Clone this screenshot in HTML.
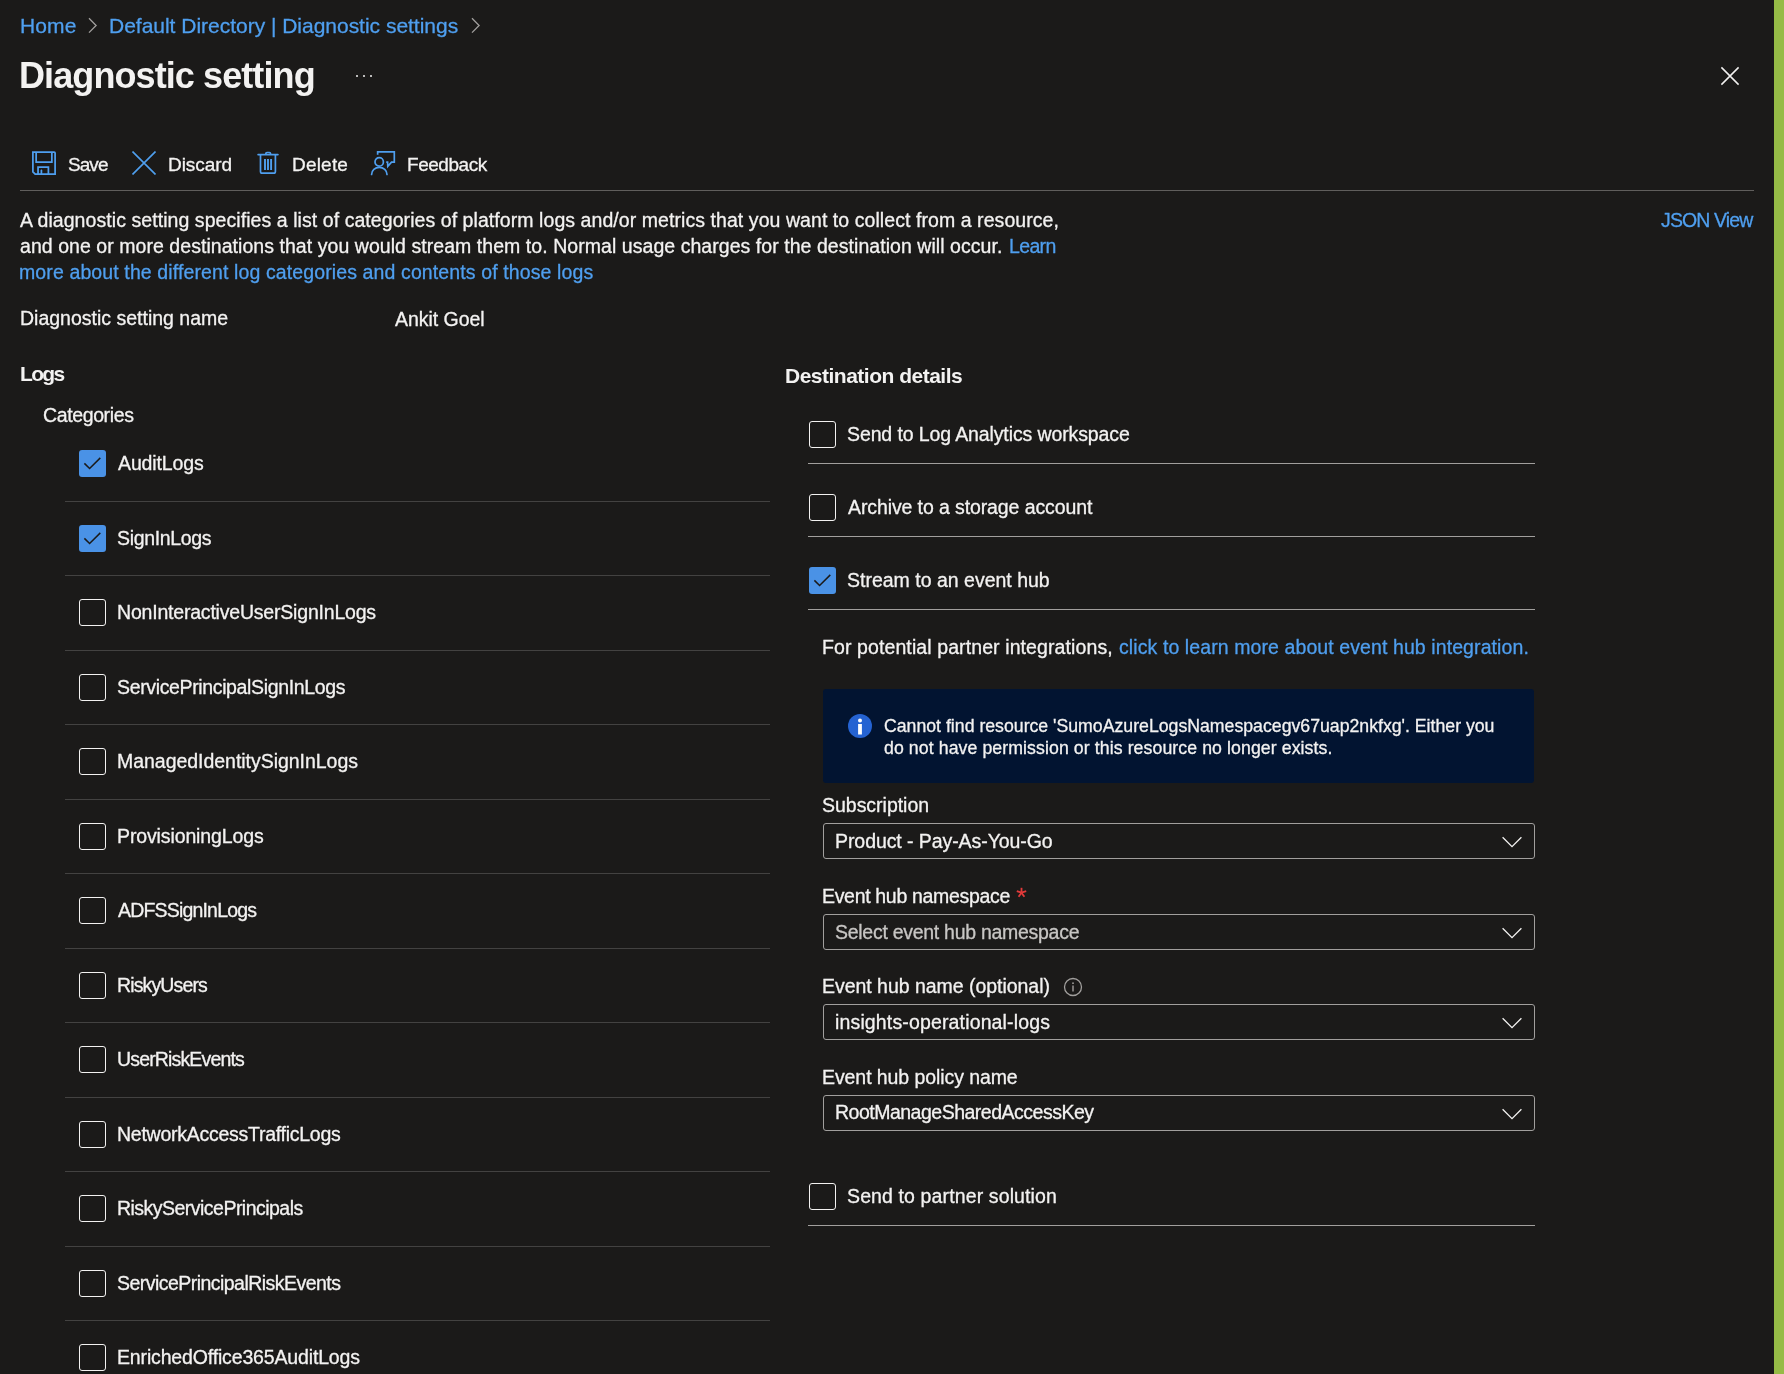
<!DOCTYPE html>
<html><head><meta charset="utf-8"><title>Diagnostic setting</title>
<style>
html,body{margin:0;padding:0;}
body{width:1784px;height:1374px;background:#1b1a19;position:relative;overflow:hidden;font-family:"Liberation Sans",sans-serif;}
.t{position:absolute;white-space:nowrap;will-change:transform;-webkit-text-stroke:0.3px currentColor;}
</style></head><body>
<div style="position:absolute;left:1774px;top:0px;width:10px;height:1374px;background:#96bb46"></div>
<div id="t_Home" class="t" style="left:20.31px;top:15px;font-size:21px;line-height:21px;font-weight:400;color:#4f9fef;letter-spacing:0.133px;">Home</div>
<svg style="position:absolute;left:86px;top:17px" width="14" height="18" viewBox="0 0 14 18"><path d="M3 1.3 L10.1 8.45 L3 15.6" fill="none" stroke="#a19f9d" stroke-width="1.3"/></svg>
<div id="t_DefaultDirectoryDiagnosticsettings" class="t" style="left:109.31px;top:15px;font-size:21px;line-height:21px;font-weight:400;color:#4f9fef;letter-spacing:-0.016px;">Default Directory | Diagnostic settings</div>
<svg style="position:absolute;left:469px;top:17px" width="14" height="18" viewBox="0 0 14 18"><path d="M3 1.3 L10.1 8.45 L3 15.6" fill="none" stroke="#a19f9d" stroke-width="1.3"/></svg>
<div id="t_Diagnosticsetting" class="t" style="left:19.00px;top:58px;font-size:36px;line-height:36px;font-weight:700;color:#f3f2f1;letter-spacing:-0.906px;-webkit-text-stroke:0;">Diagnostic setting</div>
<div style="position:absolute;left:356.2px;top:75px;width:2px;height:2px;background:#f3f2f1;border-radius:50%"></div>
<div style="position:absolute;left:362.95px;top:75px;width:2px;height:2px;background:#f3f2f1;border-radius:50%"></div>
<div style="position:absolute;left:369.7px;top:75px;width:2px;height:2px;background:#f3f2f1;border-radius:50%"></div>
<svg style="position:absolute;left:1720px;top:66px" width="20" height="20" viewBox="0 0 20 20"><path d="M1.4 1.4 L18.6 18.6 M18.6 1.4 L1.4 18.6" fill="none" stroke="#f3f2f1" stroke-width="1.5"/></svg>
<svg style="position:absolute;left:32px;top:151px" width="24" height="24" viewBox="0 0 24 24" fill="none" stroke="#4f9fef" stroke-width="1.75">
<path d="M0.9 1 H22.1 Q23.1 1 23.1 2 V23.1 H3.2 L0.9 20.8 Z"/>
<path d="M4.15 1 V11.05 H19.85 V1"/>
<path d="M6.05 23.1 V16.15 H16.4 V23.1"/>
<path d="M9.4 23.1 V19.4" stroke-linecap="round"/>
</svg>
<div id="t_Save" class="t" style="left:67.71px;top:155px;font-size:19px;line-height:19px;font-weight:400;color:#f3f2f1;letter-spacing:-0.933px;">Save</div>
<svg style="position:absolute;left:132px;top:151px" width="24" height="24" viewBox="0 0 24 24"><path d="M0.5 0.5 L23.5 23.5 M23.5 0.5 L0.5 23.5" fill="none" stroke="#4f9fef" stroke-width="1.6"/></svg>
<div id="t_Discard" class="t" style="left:167.60px;top:155px;font-size:19px;line-height:19px;font-weight:400;color:#f3f2f1;letter-spacing:-0.067px;">Discard</div>
<svg style="position:absolute;left:257px;top:151px" width="22" height="24" viewBox="0 0 22 24" fill="none" stroke="#4f9fef" stroke-width="1.7">
<path d="M1.1 3.6 H20.9" stroke-linecap="round"/>
<path d="M8.9 3.6 V2.6 Q8.9 1.5 10 1.5 H12.4 Q13.5 1.5 13.5 2.6 V3.6"/>
<path d="M3.5 3.6 V20.4 Q3.5 22.1 5.2 22.1 H16.7 Q18.4 22.1 18.4 20.4 V3.6"/>
<path d="M8 7.9 V19 M11 7.9 V19 M14.1 7.9 V19" stroke-width="1.9"/>
</svg>
<div id="t_Delete" class="t" style="left:291.71px;top:155px;font-size:19px;line-height:19px;font-weight:400;color:#f3f2f1;letter-spacing:0.200px;">Delete</div>
<svg style="position:absolute;left:370px;top:151px" width="26" height="25" viewBox="0 0 26 25" fill="none" stroke="#4f9fef" stroke-width="1.7">
<path d="M7.65 3.7 V0.8 H24.3 V11.15 H21.5 L17.8 15.3 L17.6 11.15 H16.2"/>
<circle cx="9.2" cy="10.9" r="4.2"/>
<path d="M1.6 23.5 A7.7 7.2 0 0 1 17 23.5" stroke-linecap="round"/>
</svg>
<div id="t_Feedback" class="t" style="left:407.31px;top:155px;font-size:19px;line-height:19px;font-weight:400;color:#f3f2f1;letter-spacing:-0.457px;">Feedback</div>
<div style="position:absolute;left:20px;top:190px;width:1734px;height:1px;background:#605e5c"></div>
<div id="t_Adiagnosticsettingspecifiesalistofcatego" class="t" style="left:20.40px;top:211px;font-size:19.5px;line-height:19.5px;font-weight:400;color:#f3f2f1;letter-spacing:0.066px;">A diagnostic setting specifies a list of categories of platform logs and/or metrics that you want to collect from a resource,</div>
<div id="t_andoneormoredestinationsthatyouwouldstre" class="t" style="left:20.40px;top:237px;font-size:19.5px;line-height:19.5px;font-weight:400;color:#f3f2f1;letter-spacing:0.052px;">and one or more destinations that you would stream them to. Normal usage charges for the destination will occur.</div>
<div id="t_Learn" class="t" style="left:1008.60px;top:237px;font-size:19.5px;line-height:19.5px;font-weight:400;color:#4f9fef;letter-spacing:-0.650px;">Learn</div>
<div id="t_moreaboutthedifferentlogcategoriesandcon" class="t" style="left:19.40px;top:263px;font-size:19.5px;line-height:19.5px;font-weight:400;color:#4f9fef;letter-spacing:0.117px;">more about the different log categories and contents of those logs</div>
<div id="t_JSONView" class="t" style="left:1661.00px;top:211px;font-size:19.5px;line-height:19.5px;font-weight:400;color:#4f9fef;letter-spacing:-0.875px;">JSON View</div>
<div id="t_Diagnosticsettingname" class="t" style="left:20.00px;top:309px;font-size:19.5px;line-height:19.5px;font-weight:400;color:#f3f2f1;">Diagnostic setting name</div>
<div id="t_AnkitGoel" class="t" style="left:395.10px;top:310px;font-size:19.5px;line-height:19.5px;font-weight:400;color:#f3f2f1;letter-spacing:-0.044px;">Ankit Goel</div>
<div id="t_Logs" class="t" style="left:20.00px;top:363px;font-size:21px;line-height:21px;font-weight:700;color:#f3f2f1;letter-spacing:-1.667px;-webkit-text-stroke:0;">Logs</div>
<div id="t_Categories" class="t" style="left:43.00px;top:406px;font-size:19.5px;line-height:19.5px;font-weight:400;color:#f3f2f1;letter-spacing:-0.378px;">Categories</div>
<div style="position:absolute;left:79px;top:450px;width:27px;height:27px;background:#4a92e6;border-radius:3px"><svg width="27" height="27" viewBox="0 0 27 27" style="position:absolute;left:0;top:0"><path d="M5.4 13.4 L10.6 18.5 L21.3 7.9" fill="none" stroke="#1b1a19" stroke-width="1.5"/></svg></div>
<div id="t_AuditLogs" class="t" style="left:118.00px;top:454px;font-size:19.5px;line-height:19.5px;font-weight:400;color:#f3f2f1;letter-spacing:-0.125px;">AuditLogs</div>
<div style="position:absolute;left:65px;top:501px;width:705px;height:1px;background:#434241"></div>
<div style="position:absolute;left:79px;top:525px;width:27px;height:27px;background:#4a92e6;border-radius:3px"><svg width="27" height="27" viewBox="0 0 27 27" style="position:absolute;left:0;top:0"><path d="M5.4 13.4 L10.6 18.5 L21.3 7.9" fill="none" stroke="#1b1a19" stroke-width="1.5"/></svg></div>
<div id="t_SignInLogs" class="t" style="left:117.00px;top:529px;font-size:19.5px;line-height:19.5px;font-weight:400;color:#f3f2f1;letter-spacing:-0.333px;">SignInLogs</div>
<div style="position:absolute;left:65px;top:575px;width:705px;height:1px;background:#434241"></div>
<div style="position:absolute;left:79px;top:599px;width:27px;height:27px;box-sizing:border-box;border:1.5px solid #f3f2f1;border-radius:3px"></div>
<div id="t_NonInteractiveUserSignInLogs" class="t" style="left:117.00px;top:603px;font-size:19.5px;line-height:19.5px;font-weight:400;color:#f3f2f1;letter-spacing:-0.200px;">NonInteractiveUserSignInLogs</div>
<div style="position:absolute;left:65px;top:650px;width:705px;height:1px;background:#434241"></div>
<div style="position:absolute;left:79px;top:674px;width:27px;height:27px;box-sizing:border-box;border:1.5px solid #f3f2f1;border-radius:3px"></div>
<div id="t_ServicePrincipalSignInLogs" class="t" style="left:117.00px;top:678px;font-size:19.5px;line-height:19.5px;font-weight:400;color:#f3f2f1;letter-spacing:-0.360px;">ServicePrincipalSignInLogs</div>
<div style="position:absolute;left:65px;top:724px;width:705px;height:1px;background:#434241"></div>
<div style="position:absolute;left:79px;top:748px;width:27px;height:27px;box-sizing:border-box;border:1.5px solid #f3f2f1;border-radius:3px"></div>
<div id="t_ManagedIdentitySignInLogs" class="t" style="left:117.00px;top:752px;font-size:19.5px;line-height:19.5px;font-weight:400;color:#f3f2f1;letter-spacing:-0.033px;">ManagedIdentitySignInLogs</div>
<div style="position:absolute;left:65px;top:799px;width:705px;height:1px;background:#434241"></div>
<div style="position:absolute;left:79px;top:823px;width:27px;height:27px;box-sizing:border-box;border:1.5px solid #f3f2f1;border-radius:3px"></div>
<div id="t_ProvisioningLogs" class="t" style="left:117.00px;top:827px;font-size:19.5px;line-height:19.5px;font-weight:400;color:#f3f2f1;letter-spacing:-0.120px;">ProvisioningLogs</div>
<div style="position:absolute;left:65px;top:873px;width:705px;height:1px;background:#434241"></div>
<div style="position:absolute;left:79px;top:897px;width:27px;height:27px;box-sizing:border-box;border:1.5px solid #f3f2f1;border-radius:3px"></div>
<div id="t_ADFSSignInLogs" class="t" style="left:118.00px;top:901px;font-size:19.5px;line-height:19.5px;font-weight:400;color:#f3f2f1;letter-spacing:-0.815px;">ADFSSignInLogs</div>
<div style="position:absolute;left:65px;top:948px;width:705px;height:1px;background:#434241"></div>
<div style="position:absolute;left:79px;top:972px;width:27px;height:27px;box-sizing:border-box;border:1.5px solid #f3f2f1;border-radius:3px"></div>
<div id="t_RiskyUsers" class="t" style="left:117.00px;top:976px;font-size:19.5px;line-height:19.5px;font-weight:400;color:#f3f2f1;letter-spacing:-0.867px;">RiskyUsers</div>
<div style="position:absolute;left:65px;top:1022px;width:705px;height:1px;background:#434241"></div>
<div style="position:absolute;left:79px;top:1046px;width:27px;height:27px;box-sizing:border-box;border:1.5px solid #f3f2f1;border-radius:3px"></div>
<div id="t_UserRiskEvents" class="t" style="left:117.00px;top:1050px;font-size:19.5px;line-height:19.5px;font-weight:400;color:#f3f2f1;letter-spacing:-0.846px;">UserRiskEvents</div>
<div style="position:absolute;left:65px;top:1097px;width:705px;height:1px;background:#434241"></div>
<div style="position:absolute;left:79px;top:1121px;width:27px;height:27px;box-sizing:border-box;border:1.5px solid #f3f2f1;border-radius:3px"></div>
<div id="t_NetworkAccessTrafficLogs" class="t" style="left:117.00px;top:1125px;font-size:19.5px;line-height:19.5px;font-weight:400;color:#f3f2f1;letter-spacing:-0.261px;">NetworkAccessTrafficLogs</div>
<div style="position:absolute;left:65px;top:1171px;width:705px;height:1px;background:#434241"></div>
<div style="position:absolute;left:79px;top:1195px;width:27px;height:27px;box-sizing:border-box;border:1.5px solid #f3f2f1;border-radius:3px"></div>
<div id="t_RiskyServicePrincipals" class="t" style="left:117.00px;top:1199px;font-size:19.5px;line-height:19.5px;font-weight:400;color:#f3f2f1;letter-spacing:-0.524px;">RiskyServicePrincipals</div>
<div style="position:absolute;left:65px;top:1246px;width:705px;height:1px;background:#434241"></div>
<div style="position:absolute;left:79px;top:1270px;width:27px;height:27px;box-sizing:border-box;border:1.5px solid #f3f2f1;border-radius:3px"></div>
<div id="t_ServicePrincipalRiskEvents" class="t" style="left:117.00px;top:1274px;font-size:19.5px;line-height:19.5px;font-weight:400;color:#f3f2f1;letter-spacing:-0.536px;">ServicePrincipalRiskEvents</div>
<div style="position:absolute;left:65px;top:1320px;width:705px;height:1px;background:#434241"></div>
<div style="position:absolute;left:79px;top:1344px;width:27px;height:27px;box-sizing:border-box;border:1.5px solid #f3f2f1;border-radius:3px"></div>
<div id="t_EnrichedOffice365AuditLogs" class="t" style="left:117.00px;top:1348px;font-size:19.5px;line-height:19.5px;font-weight:400;color:#f3f2f1;letter-spacing:-0.152px;">EnrichedOffice365AuditLogs</div>
<div id="t_Destinationdetails" class="t" style="left:784.90px;top:365px;font-size:21px;line-height:21px;font-weight:700;color:#f3f2f1;letter-spacing:-0.500px;-webkit-text-stroke:0;">Destination details</div>
<div style="position:absolute;left:809px;top:421px;width:27px;height:27px;box-sizing:border-box;border:1.5px solid #f3f2f1;border-radius:3px"></div>
<div id="t_SendtoLogAnalyticsworkspace" class="t" style="left:847.40px;top:425px;font-size:19.5px;line-height:19.5px;font-weight:400;color:#f3f2f1;letter-spacing:-0.113px;">Send to Log Analytics workspace</div>
<div style="position:absolute;left:808px;top:463px;width:727px;height:1px;background:#a19f9d"></div>
<div style="position:absolute;left:809px;top:494px;width:27px;height:27px;box-sizing:border-box;border:1.5px solid #f3f2f1;border-radius:3px"></div>
<div id="t_Archivetoastorageaccount" class="t" style="left:848.40px;top:498px;font-size:19.5px;line-height:19.5px;font-weight:400;color:#f3f2f1;letter-spacing:-0.104px;">Archive to a storage account</div>
<div style="position:absolute;left:808px;top:536px;width:727px;height:1px;background:#a19f9d"></div>
<div style="position:absolute;left:809px;top:567px;width:27px;height:27px;background:#4a92e6;border-radius:3px"><svg width="27" height="27" viewBox="0 0 27 27" style="position:absolute;left:0;top:0"><path d="M5.4 13.4 L10.6 18.5 L21.3 7.9" fill="none" stroke="#1b1a19" stroke-width="1.5"/></svg></div>
<div id="t_Streamtoaneventhub" class="t" style="left:847.40px;top:571px;font-size:19.5px;line-height:19.5px;font-weight:400;color:#f3f2f1;letter-spacing:0.000px;">Stream to an event hub</div>
<div style="position:absolute;left:808px;top:609px;width:727px;height:1px;background:#a19f9d"></div>
<div id="t_Forpotentialpartnerintegrations" class="t" style="left:822.31px;top:638px;font-size:19.5px;line-height:19.5px;font-weight:400;color:#f3f2f1;letter-spacing:0.100px;">For potential partner integrations,</div>
<div id="t_clicktolearnmoreabouteventhubintegration" class="t" style="left:1119.21px;top:638px;font-size:19.5px;line-height:19.5px;font-weight:400;color:#4f9fef;letter-spacing:0.094px;">click to learn more about event hub integration.</div>
<div style="position:absolute;left:823px;top:689px;width:711px;height:94px;background:#021431;border-radius:3px"></div>
<svg style="position:absolute;left:848px;top:714px" width="24" height="24" viewBox="0 0 24 24"><circle cx="12" cy="12" r="12" fill="#2563d2"/><circle cx="12" cy="6.4" r="2" fill="#fff"/><rect x="10.1" y="10" width="3.8" height="10.5" fill="#fff"/></svg>
<div id="t_CannotfindresourceSumoAzureLogsNamespace" class="t" style="left:883.81px;top:718px;font-size:17.7px;line-height:17.7px;font-weight:400;color:#f3f2f1;">Cannot find resource 'SumoAzureLogsNamespacegv67uap2nkfxg'. Either you</div>
<div id="t_donothavepermissionorthisresourcenolonge" class="t" style="left:883.81px;top:740px;font-size:17.7px;line-height:17.7px;font-weight:400;color:#f3f2f1;letter-spacing:0.089px;">do not have permission or this resource no longer exists.</div>
<div id="t_Subscription" class="t" style="left:822.40px;top:796px;font-size:19.5px;line-height:19.5px;font-weight:400;color:#f3f2f1;letter-spacing:-0.018px;">Subscription</div>
<div style="position:absolute;left:823px;top:823px;width:712px;height:36px;box-sizing:border-box;border:1.5px solid #a19f9d;border-radius:3px"></div>
<div id="t_ProductPayAsYouGo" class="t" style="left:835.40px;top:832px;font-size:19.5px;line-height:19.5px;font-weight:400;color:#f3f2f1;letter-spacing:-0.073px;">Product - Pay-As-You-Go</div>
<svg style="position:absolute;left:1501px;top:836px" width="22" height="13" viewBox="0 0 22 13"><path d="M1.6 1.2 L11 10.6 L20.4 1.2" fill="none" stroke="#f3f2f1" stroke-width="1.3"/></svg>
<div id="t_Eventhubnamespace" class="t" style="left:822.40px;top:887px;font-size:19.5px;line-height:19.5px;font-weight:400;color:#f3f2f1;letter-spacing:-0.322px;">Event hub namespace</div>
<div style="position:absolute;left:823px;top:914px;width:712px;height:36px;box-sizing:border-box;border:1.5px solid #a19f9d;border-radius:3px"></div>
<div id="t_Selecteventhubnamespace" class="t" style="left:835.40px;top:923px;font-size:19.5px;line-height:19.5px;font-weight:400;color:#c8c6c4;letter-spacing:-0.280px;">Select event hub namespace</div>
<svg style="position:absolute;left:1501px;top:927px" width="22" height="13" viewBox="0 0 22 13"><path d="M1.6 1.2 L11 10.6 L20.4 1.2" fill="none" stroke="#f3f2f1" stroke-width="1.3"/></svg>
<svg style="position:absolute;left:1015px;top:886px" width="13" height="13" viewBox="0 0 13 13"><g stroke="#e23a3a" stroke-width="1.8" stroke-linecap="butt"><path d="M6.5 6.7 V1.8"/><path d="M6.5 6.7 L11.2 5.2"/><path d="M6.5 6.7 L9.4 10.8"/><path d="M6.5 6.7 L3.6 10.8"/><path d="M6.5 6.7 L1.8 5.2"/></g></svg>
<div id="t_Eventhubnameoptional" class="t" style="left:822.40px;top:977px;font-size:19.5px;line-height:19.5px;font-weight:400;color:#f3f2f1;letter-spacing:-0.033px;">Event hub name (optional)</div>
<div style="position:absolute;left:823px;top:1004px;width:712px;height:36px;box-sizing:border-box;border:1.5px solid #a19f9d;border-radius:3px"></div>
<div id="t_insightsoperationallogs" class="t" style="left:835.40px;top:1013px;font-size:19.5px;line-height:19.5px;font-weight:400;color:#f3f2f1;letter-spacing:0.150px;">insights-operational-logs</div>
<svg style="position:absolute;left:1501px;top:1017px" width="22" height="13" viewBox="0 0 22 13"><path d="M1.6 1.2 L11 10.6 L20.4 1.2" fill="none" stroke="#f3f2f1" stroke-width="1.3"/></svg>
<svg style="position:absolute;left:1063px;top:976.5px" width="20" height="20" viewBox="0 0 20 20"><circle cx="10" cy="10" r="8.5" fill="none" stroke="#a19f9d" stroke-width="1.3"/><rect x="9.3" y="8.5" width="1.4" height="6" fill="#a19f9d"/><circle cx="10" cy="6.2" r="0.9" fill="#a19f9d"/></svg>
<div id="t_Eventhubpolicyname" class="t" style="left:822.40px;top:1068px;font-size:19.5px;line-height:19.5px;font-weight:400;color:#f3f2f1;letter-spacing:-0.080px;">Event hub policy name</div>
<div style="position:absolute;left:823px;top:1095px;width:712px;height:36px;box-sizing:border-box;border:1.5px solid #a19f9d;border-radius:3px"></div>
<div id="t_RootManageSharedAccessKey" class="t" style="left:835.40px;top:1103px;font-size:19.5px;line-height:19.5px;font-weight:400;color:#f3f2f1;letter-spacing:-0.500px;">RootManageSharedAccessKey</div>
<svg style="position:absolute;left:1501px;top:1108px" width="22" height="13" viewBox="0 0 22 13"><path d="M1.6 1.2 L11 10.6 L20.4 1.2" fill="none" stroke="#f3f2f1" stroke-width="1.3"/></svg>
<div style="position:absolute;left:809px;top:1183px;width:27px;height:27px;box-sizing:border-box;border:1.5px solid #f3f2f1;border-radius:3px"></div>
<div id="t_Sendtopartnersolution" class="t" style="left:847.40px;top:1187px;font-size:19.5px;line-height:19.5px;font-weight:400;color:#f3f2f1;letter-spacing:0.122px;">Send to partner solution</div>
<div style="position:absolute;left:808px;top:1225px;width:727px;height:1px;background:#a19f9d"></div>
</body></html>
